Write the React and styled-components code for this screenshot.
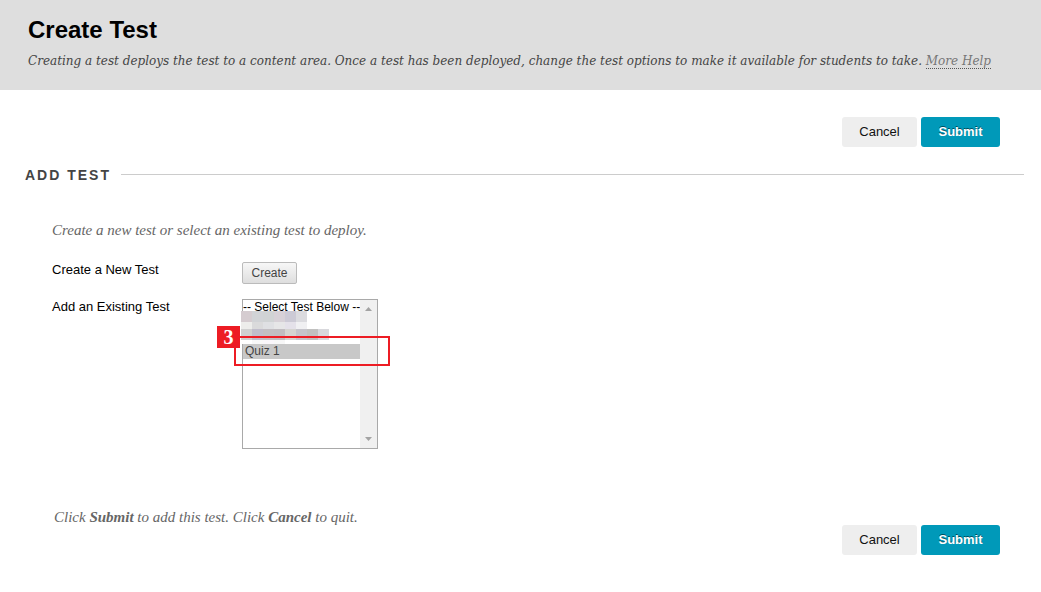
import React from 'react';
import styled, { createGlobalStyle } from 'styled-components';

const sans = `'Liberation Sans', Arial, sans-serif`;
const serif = `'Liberation Serif', Georgia, serif`;
const wideSerif = `'DejaVu Serif', Georgia, serif`;

const GlobalStyle = createGlobalStyle`
  * {
    box-sizing: border-box;
  }
  body {
    margin: 0;
    background: #fff;
    color: #000;
    font: 13px/16px ${sans};
  }
`;

const PageHeader = styled.header`
  padding: 16px 12px 19px 28px;
  background: #dedede;
`;

const PageTitle = styled.h1`
  margin: 0;
  font-size: 24px;
  line-height: 28px;
`;

const HelpText = styled.p`
  margin: 7px 0 0;
  font: italic 12px/20px ${wideSerif};
  color: #444;
`;

const HelpLink = styled.a`
  color: #777;
  text-decoration: none;
  border-bottom: 1px dotted #555;
`;

const Form = styled.form`
  padding: 27px 17px 37px 25px;
`;

const ButtonBar = styled.div`
  display: flex;
  justify-content: flex-end;
  gap: 4px;
  padding-right: 24px;
`;

const ActionButton = styled.button`
  min-width: ${props => props.$primary ? '79px' : '75px'};
  height: 30px;
  padding: 0 16px;
  border: 0;
  border-radius: 3px;
  background: ${props => props.$primary ? '#0099b9' : '#eee'};
  color: ${props => props.$primary ? '#fff' : '#111'};
  font: ${props => props.$primary ? 'bold' : 'normal'} 13px/16px ${sans};
  text-shadow: ${props => props.$primary ? '0 -1px 0 rgba(0, 0, 0, 0.5)' : 'none'};
`;

const SectionTitle = styled.h2`
  display: flex;
  align-items: center;
  gap: 10px;
  margin: 20px 0 0;
  font-size: 14px;
  line-height: 16px;
  letter-spacing: 2px;
  color: #444;

  &::after {
    content: '';
    flex: 1;
    height: 2px;
    border-top: 1px solid #ccc;
  }
`;

const SectionBody = styled.div`
  padding: 37px 0 0 27px;
`;

const Instructions = styled.p`
  margin: 0;
  font: italic 15px/20px ${serif};
  color: #666;
`;

const Field = styled.div`
  display: grid;
  grid-template-columns: 190px 1fr;
  align-items: start;
  margin-top: ${props => props.$gap};
`;

const Label = styled.label`
  line-height: 16px;
`;

const CreateButton = styled.button`
  justify-self: start;
  min-width: 55px;
  height: 22px;
  padding: 0 8px;
  border: 1px solid #bbb;
  border-radius: 2px;
  background: linear-gradient(#f7f7f7, #dedede);
  color: #444;
  font: 12px/16px ${sans};
`;

const ListWrap = styled.div`
  position: relative;
  justify-self: start;
`;

const TestList = styled.select`
  display: block;
  width: 136px;
  height: 150px;
  padding: 0;
  border: 1px solid #a9a9a9;
  border-radius: 0;
  background: #fff;
  font: 12px/14px ${sans};
  outline: 0;

  option {
    height: 15px;
    min-height: 0;
    padding: 0 2px;
    line-height: 12px;
  }

  option:first-child {
    height: 14px;
    padding: 0;
  }

  option:checked {
    background: #c8c8c8 linear-gradient(#c8c8c8, #c8c8c8);
    color: #444;
  }
`;

const ScrollTrack = styled.div`
  position: absolute;
  top: 1px;
  right: 1px;
  bottom: 1px;
  width: 17px;
  display: flex;
  flex-direction: column;
  justify-content: space-between;
  align-items: center;
  padding: 7px 0;
  background: #f0f0f0;
  pointer-events: none;
`;

const HiddenNames = styled.svg`
  position: absolute;
  top: 12px;
  left: -1px;
  pointer-events: none;
`;

const Highlight = styled.div`
  position: absolute;
  top: 37px;
  left: -8px;
  width: 156px;
  height: 30px;
  border: 2px solid #ed1c24;
  pointer-events: none;
`;

const StepBadge = styled.div`
  position: absolute;
  top: 27px;
  left: -25px;
  width: 23px;
  height: 22px;
  background: #ed1c24;
  color: #fff;
  font: bold 20px/22px 'Liberation Serif', serif;
  text-align: center;
`;

const FormFooter = styled.div`
  display: flex;
  justify-content: space-between;
  align-items: start;
  margin-top: 58px;
  padding-left: 29px;

  ${ButtonBar} {
    margin-top: 18px;
  }
`;

// blurred-out test names, one list of block colours per strip
const strips = [
  { y: 0, h: 11, colors: ['#d5ccd0', '#d1d3d6', '#d0d3d4', '#d7d1d7', '#cccad5', '#dbdbdf'] },
  { y: 11, h: 7, colors: ['#ededeb', '#dadadb', '#dfe0e3', '#e6e6e7', '#e4e1e9', '#f0f0f2'] },
  { y: 18, h: 11, colors: ['#d0d0d0', '#c0bdcb', '#c2bec2', '#c1bdc1', '#d5d4d1', '#c5c4cb', '#c1c1c0', '#d8d8dc'] },
  { y: 29, h: 4, colors: ['#fff', '#f8f8f8', '#f9f6fa', '#f7f7f7'] },
];

const Buttons = () => (
  <ButtonBar>
    <ActionButton type="button">Cancel</ActionButton>
    <ActionButton type="submit" $primary>Submit</ActionButton>
  </ButtonBar>
);

const App = () => (
  <>
    <GlobalStyle />
    <PageHeader>
      <PageTitle>Create Test</PageTitle>
      <HelpText>
        Creating a test deploys the test to a content area. Once a test has been deployed, change the test options to make it available for students to take. <HelpLink href="#help">More Help</HelpLink>
      </HelpText>
    </PageHeader>
    <Form>
      <Buttons />
      <SectionTitle>ADD TEST</SectionTitle>
      <SectionBody>
        <Instructions>Create a new test or select an existing test to deploy.</Instructions>
        <Field $gap="22px">
          <Label htmlFor="create">Create a New Test</Label>
          <CreateButton id="create" type="button">Create</CreateButton>
        </Field>
        <Field $gap="15px">
          <Label htmlFor="tests">Add an Existing Test</Label>
          <ListWrap>
            <TestList id="tests" size={10} defaultValue="quiz1">
              <option value="">-- Select Test Below --</option>
              <option value="a" />
              <option value="b" />
              <option value="quiz1">Quiz 1</option>
            </TestList>
            <ScrollTrack aria-hidden="true">
              <svg width="7" height="4"><path d="M0 4L3.5 0L7 4Z" fill="#a3a3a3" /></svg>
              <svg width="7" height="4"><path d="M0 0H7L3.5 4Z" fill="#a3a3a3" /></svg>
            </ScrollTrack>
            <HiddenNames width="89" height="33" shapeRendering="crispEdges" aria-hidden="true">
              {strips.map(strip => strip.colors.map((color, i) => (
                <rect key={`${strip.y}-${i}`} x={i * 11} y={strip.y} width="11" height={strip.h} fill={color} />
              )))}
            </HiddenNames>
            <Highlight />
            <StepBadge>3</StepBadge>
          </ListWrap>
        </Field>
      </SectionBody>
      <FormFooter>
        <Instructions>Click <b>Submit</b> to add this test. Click <b>Cancel</b> to quit.</Instructions>
        <Buttons />
      </FormFooter>
    </Form>
  </>
);

export default App;
